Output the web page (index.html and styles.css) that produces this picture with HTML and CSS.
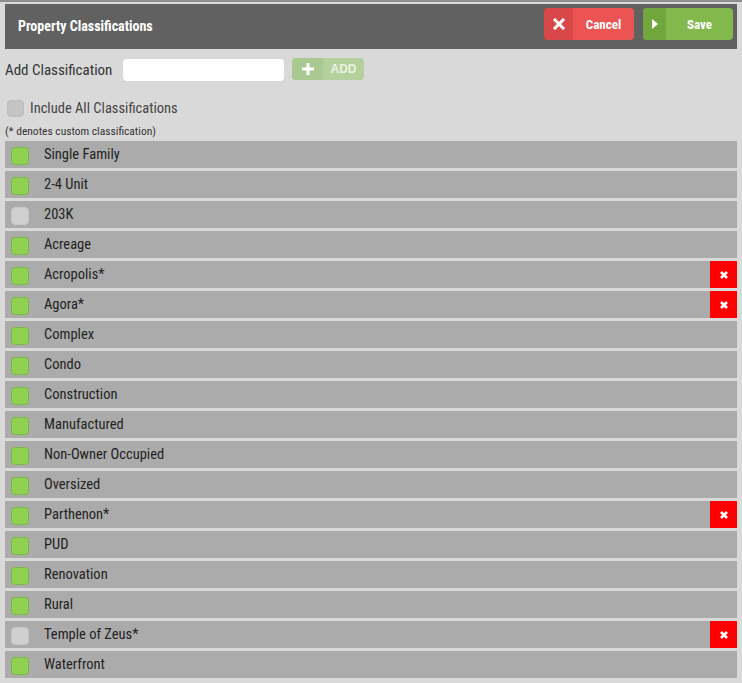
FILE: index.html
```html
<!DOCTYPE html>
<html>
<head>
<meta charset="utf-8">
<link rel="stylesheet" href="styles.css">
</head>
<body>
<div class="topline"></div>
<div class="page">
  <div class="header">
    <div class="title">Property Classifications</div>
    <div class="actions">
      <button class="btn btn-cancel"><span class="btn-icon"><svg width="12" height="12" viewBox="0 0 12 12"><path d="M2 2 L10 10 M10 2 L2 10" stroke="#fff" stroke-width="3" stroke-linecap="square"/></svg></span><span class="btn-label">Cancel</span></button>
      <button class="btn btn-save"><span class="btn-icon"><svg width="6" height="10" viewBox="0 0 6 10"><path d="M0 0 L6 5 L0 10 Z" fill="#fff"/></svg></span><span class="btn-label">Save</span></button>
    </div>
  </div>

  <div class="add-row">
    <label class="add-label">Add Classification</label>
    <input class="add-input" type="text">
    <button class="add-btn"><span class="add-icon"><svg width="12" height="12" viewBox="0 0 12 12"><path d="M6 0 V12 M0 6 H12" stroke="#fff" stroke-width="3"/></svg></span><span class="add-text">ADD</span></button>
  </div>

  <div class="include-row">
    <span class="cb cb-off cb-include"></span>
    <span class="include-label">Include All Classifications</span>
  </div>
  <div class="note">(* denotes custom classification)</div>

  <div class="list">
    <div class="row"><span class="cb cb-on"></span><span class="name">Single Family</span></div>
    <div class="row"><span class="cb cb-on"></span><span class="name">2-4 Unit</span></div>
    <div class="row"><span class="cb cb-off"></span><span class="name">203K</span></div>
    <div class="row"><span class="cb cb-on"></span><span class="name">Acreage</span></div>
    <div class="row"><span class="cb cb-on"></span><span class="name">Acropolis*</span><span class="del"><svg width="10" height="10" viewBox="0 0 10 10"><path d="M2 2 L8 8 M8 2 L2 8" stroke="#fff" stroke-width="2.6"/></svg></span></div>
    <div class="row"><span class="cb cb-on"></span><span class="name">Agora*</span><span class="del"><svg width="10" height="10" viewBox="0 0 10 10"><path d="M2 2 L8 8 M8 2 L2 8" stroke="#fff" stroke-width="2.6"/></svg></span></div>
    <div class="row"><span class="cb cb-on"></span><span class="name">Complex</span></div>
    <div class="row"><span class="cb cb-on"></span><span class="name">Condo</span></div>
    <div class="row"><span class="cb cb-on"></span><span class="name">Construction</span></div>
    <div class="row"><span class="cb cb-on"></span><span class="name">Manufactured</span></div>
    <div class="row"><span class="cb cb-on"></span><span class="name">Non-Owner Occupied</span></div>
    <div class="row"><span class="cb cb-on"></span><span class="name">Oversized</span></div>
    <div class="row"><span class="cb cb-on"></span><span class="name">Parthenon*</span><span class="del"><svg width="10" height="10" viewBox="0 0 10 10"><path d="M2 2 L8 8 M8 2 L2 8" stroke="#fff" stroke-width="2.6"/></svg></span></div>
    <div class="row"><span class="cb cb-on"></span><span class="name">PUD</span></div>
    <div class="row"><span class="cb cb-on"></span><span class="name">Renovation</span></div>
    <div class="row"><span class="cb cb-on"></span><span class="name">Rural</span></div>
    <div class="row"><span class="cb cb-off"></span><span class="name">Temple of Zeus*</span><span class="del"><svg width="10" height="10" viewBox="0 0 10 10"><path d="M2 2 L8 8 M8 2 L2 8" stroke="#fff" stroke-width="2.6"/></svg></span></div>
    <div class="row"><span class="cb cb-on"></span><span class="name">Waterfront</span></div>
  </div>
</div>
</body>
</html>
```

FILE: styles.css
```css
html, body {
  margin: 0;
  padding: 0;
  background: #d9d9d9;
  font-family: "Roboto Condensed", "Liberation Sans Narrow", "DejaVu Sans Condensed", Roboto, sans-serif;
  color: #222;
}
.topline {
  height: 2px;
  background: #8d8d8d;
  margin-bottom: 2px;
}
.page {
  width: 732px;
  margin-left: 5px;
}
.header {
  height: 45px;
  background: #616161;
  display: flex;
  align-items: flex-start;
  justify-content: space-between;
  box-sizing: border-box;
  padding: 4px 4px 0 13px;
}
.title {
  color: #fff;
  font-weight: 700;
  font-size: 14px;
  line-height: 16px;
  margin-top: 10px;
}
.actions {
  display: flex;
  gap: 9px;
}
.btn {
  display: flex;
  height: 32px;
  width: 90px;
  border: 0;
  padding: 0;
  border-radius: 4px;
  overflow: hidden;
  font-family: inherit;
  font-weight: 700;
  font-size: 13px;
  color: #fff;
}
.btn-icon {
  display: flex;
  align-items: center;
  justify-content: center;
  height: 100%;
}
.btn-label {
  flex: 1;
  display: flex;
  align-items: center;
  justify-content: center;
  height: 100%;
}
.btn-cancel { background: #ec5454; }
.btn-cancel .btn-icon { width: 29px; background: #d8484b; }
.btn-save { background: #82b84c; }
.btn-save .btn-icon { width: 23px; background: #72a63f; }

.add-row {
  display: flex;
  align-items: center;
  height: 22px;
  margin-top: 10px;
}
.add-label {
  font-size: 15px;
  color: #333;
  width: 118px;
}
.add-input {
  width: 161px;
  height: 22px;
  box-sizing: border-box;
  border: 0;
  border-radius: 4px;
  background: #fff;
  margin: 0;
  padding: 0 6px;
}
.add-btn {
  margin-left: 8px;
  display: flex;
  height: 22px;
  width: 72px;
  border: 0;
  padding: 0;
  border-radius: 4px;
  overflow: hidden;
  background: #b4d09d;
  margin-top: -2px;
}
.add-icon {
  width: 31px;
  height: 100%;
  display: flex;
  align-items: center;
  justify-content: center;
  background: #a9c990;
}
.add-text {
  flex: 1;
  height: 100%;
  display: flex;
  align-items: center;
  justify-content: center;
  color: #e9f2e0;
  font-weight: 700;
  font-size: 12px;
}
.include-row {
  display: flex;
  align-items: center;
  margin-top: 18px;
  height: 18px;
}
.cb {
  display: inline-block;
  width: 18px;
  height: 18px;
  box-sizing: border-box;
  border-radius: 4px;
  flex: none;
}
.cb-on {
  background: #8fd151;
  border: 1px solid #7cb846;
}
.cb-off {
  background: #cfcfcf;
  border: 1px solid #c6c6c6;
}
.cb-include {
  margin-left: 2px;
  width: 17px;
  height: 17px;
  background: #c4c4c4;
  border-color: #bdbdbd;
}
.include-label {
  margin-left: 6px;
  font-size: 14.5px;
  color: #444;
}
.note {
  font-size: 11.5px;
  color: #333;
  margin-top: 7px;
  height: 14px;
  line-height: 14px;
}
.list {
  display: flex;
  flex-direction: column;
  gap: 3px;
  margin-top: 3px;
}
.row {
  height: 27px;
  background: #ababab;
  display: flex;
  align-items: center;
  padding-left: 6px;
}
.row .cb { margin-top: 2px; }
.name {
  margin-left: 15px;
  padding-bottom: 1px;
  font-size: 14.5px;
  color: #222;
  flex: 1;
}
.del {
  width: 27px;
  height: 27px;
  background: #ff0000;
  display: flex;
  align-items: center;
  justify-content: center;
}
```
